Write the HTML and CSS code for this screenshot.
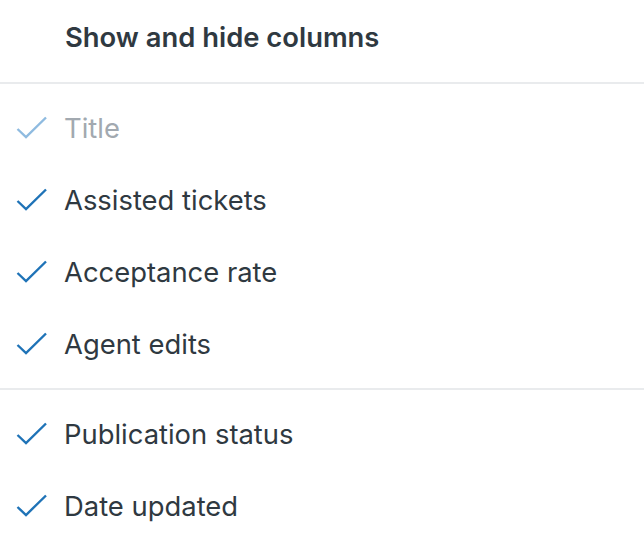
FILE: index.html
```html
<!DOCTYPE html>
<html>
<head>
<meta charset="utf-8">
<link rel="stylesheet" href="styles.css">
</head>
<body>
<div class="menu">
  <div class="header">Show and hide columns</div>
  <div class="section">
    <div class="item disabled"><svg class="check" viewBox="0 0 32 24"><path d="M1.5 13 L10 21 L30 1.5"/></svg><span>Title</span></div>
    <div class="item"><svg class="check" viewBox="0 0 32 24"><path d="M1.5 13 L10 21 L30 1.5"/></svg><span>Assisted tickets</span></div>
    <div class="item"><svg class="check" viewBox="0 0 32 24"><path d="M1.5 13 L10 21 L30 1.5"/></svg><span>Acceptance rate</span></div>
    <div class="item"><svg class="check" viewBox="0 0 32 24"><path d="M1.5 13 L10 21 L30 1.5"/></svg><span>Agent edits</span></div>
  </div>
  <div class="section">
    <div class="item"><svg class="check" viewBox="0 0 32 24"><path d="M1.5 13 L10 21 L30 1.5"/></svg><span>Publication status</span></div>
    <div class="item"><svg class="check" viewBox="0 0 32 24"><path d="M1.5 13 L10 21 L30 1.5"/></svg><span>Date updated</span></div>
  </div>
</div>
</body>
</html>
```
FILE: styles.css
```css
html, body {
  margin: 0;
  padding: 0;
  background: #fff;
}
body {
  font-family: Inter, "Liberation Sans", sans-serif;
  color: #2f3941;
  font-size: 27.4px;
  line-height: 40px;
}
.menu {
  width: 644px;
}
.header {
  font-weight: 600;
  padding: 17px 0 25px 65px;
  border-bottom: 2px solid #e9ebed;
}
.section {
  padding: 8px 0;
}
.section + .section {
  border-top: 2px solid #e9ebed;
}
.item {
  display: flex;
  align-items: center;
  height: 72px;
}
.check {
  width: 32px;
  height: 24px;
  margin-left: 16px;
  margin-right: 16px;
  fill: none;
  stroke: #1f73b7;
  stroke-width: 2.4;
}
.disabled span {
  color: #a2a9b0;
}
.disabled .check {
  stroke: #8fbbe0;
}
```
